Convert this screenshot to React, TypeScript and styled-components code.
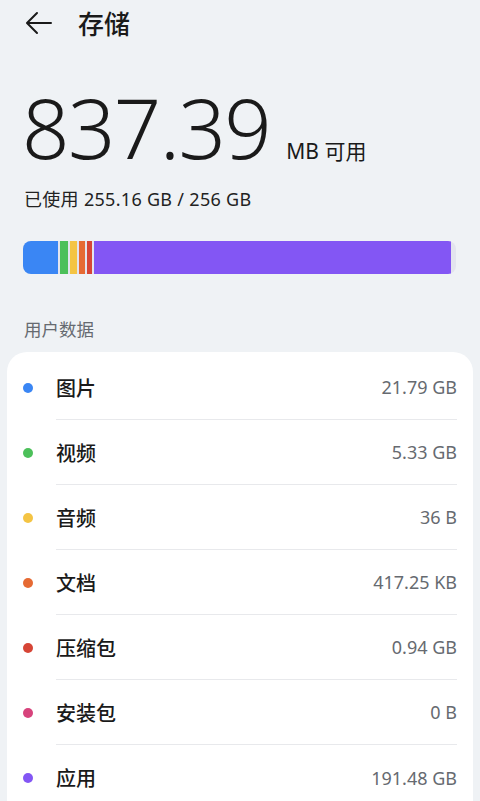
import React, { FC } from 'react'
import styled, { createGlobalStyle } from 'styled-components'

const GlobalStyle = createGlobalStyle`
  html, body {
    margin: 0;
    padding: 0;
    background: #eff2f5;
  }
  body {
    font-family: "Noto Sans", "Noto Sans CJK SC", sans-serif;
    color: #1a1a1a;
  }
`

type Category = { name: string; size: string; color: string; share: number }

const categories: Category[] = [
  { name: '图片', size: '21.79 GB', color: '#3a86f4', share: 35 },
  { name: '视频', size: '5.33 GB', color: '#4cc05a', share: 8 },
  { name: '音频', size: '36 B', color: '#f4c444', share: 7 },
  { name: '文档', size: '417.25 KB', color: '#e66a33', share: 6 },
  { name: '压缩包', size: '0.94 GB', color: '#d64536', share: 5 },
  { name: '安装包', size: '0 B', color: '#d7437c', share: 0 },
  { name: '应用', size: '191.48 GB', color: '#8356f4', share: 357 },
]

const App: FC = () => {
  return (
    <>
      <GlobalStyle />
      <Page>
        <Header>
          <BackButton aria-label="返回">
            <svg width="28" height="24" viewBox="0 0 28 24" fill="none">
              <path
                d="M26 12H3M12 2L2 12l10 10"
                stroke="#1a1a1a"
                strokeWidth="2"
                strokeLinecap="round"
                strokeLinejoin="round"
              />
            </svg>
          </BackButton>
          <Title>存储</Title>
        </Header>

        <Summary>
          <FreeRow>
            <FreeValue>837.39</FreeValue>
            <FreeUnit>MB 可用</FreeUnit>
          </FreeRow>
          <Used>已使用 255.16 GB / 256 GB</Used>
        </Summary>

        <UsageBar>
          {categories
            .filter((c) => c.share > 0)
            .map((c) => (
              <Segment key={c.name} $color={c.color} style={{ width: c.share }} />
            ))}
        </UsageBar>

        <SectionLabel>用户数据</SectionLabel>

        <Card>
          {categories.map((c, i) => (
            <Row key={c.name}>
              <Dot $color={c.color} />
              <RowBody $last={i === categories.length - 1}>
                <Name>{c.name}</Name>
                <Size>{c.size}</Size>
              </RowBody>
            </Row>
          ))}
        </Card>
      </Page>
    </>
  )
}

const Page = styled.div`
  width: 480px;
  height: 801px;
  overflow: hidden;
  background: #eff2f5;
`

const Header = styled.div`
  display: flex;
  align-items: center;
  height: 46px;
  padding: 0 0 0 25px;
`

const BackButton = styled.button`
  display: flex;
  align-items: center;
  padding: 0;
  border: none;
  background: none;
  margin-right: 25px;
`

const Title = styled.div`
  font-size: 26px;
  font-weight: 500;
`

const Summary = styled.div`
  padding: 40px 0 0 24px;
`

const FreeRow = styled.div`
  display: flex;
  align-items: baseline;
  height: 82px;
`

const FreeValue = styled.div`
  font-family: "Noto Sans", sans-serif;
  font-size: 83px;
  font-weight: 300;
  line-height: 82px;
  letter-spacing: -1.5px;
  margin-left: -2px;
`

const FreeUnit = styled.div`
  font-size: 21px;
  margin-left: 16px;
`

const Used = styled.div`
  font-size: 18px;
  margin-top: 17px;
  color: #222;
  letter-spacing: 0.3px;
`

const UsageBar = styled.div`
  display: flex;
  gap: 2px;
  margin: 30px 24px 0 23px;
  height: 33px;
  border-radius: 8px;
  overflow: hidden;
  background: #e3e4ee;
`

const Segment = styled.div<{ $color: string }>`
  flex: none;
  background: ${(p) => p.$color};
`

const SectionLabel = styled.div`
  font-size: 17.5px;
  color: #666a70;
  padding: 42px 0 0 24px;
  height: 36px;
`

const Card = styled.div`
  margin: 0 7px;
  background: #fff;
  border-radius: 20px 20px 0 0;
  padding-top: 3px;
`

const Row = styled.div`
  display: flex;
  align-items: center;
  height: 65px;
`

const Dot = styled.div<{ $color: string }>`
  width: 10px;
  height: 10px;
  border-radius: 50%;
  background: ${(p) => p.$color};
  margin: 0 23px 0 16px;
  flex: none;
`

const RowBody = styled.div<{ $last: boolean }>`
  flex: 1;
  height: 100%;
  display: flex;
  align-items: center;
  justify-content: space-between;
  margin-right: 16px;
  border-bottom: ${(p) => (p.$last ? 'none' : '1px solid #e8e9ec')};
  box-sizing: border-box;
`

const Name = styled.div`
  font-size: 20px;
  font-weight: 500;
`

const Size = styled.div`
  font-size: 18px;
  color: #666a70;
`

export default App
